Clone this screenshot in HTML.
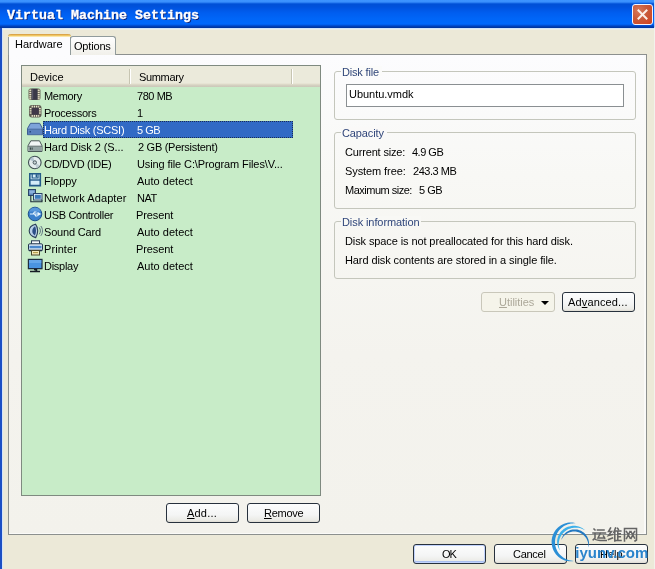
<!DOCTYPE html>
<html><head><meta charset="utf-8"><style>
*{margin:0;padding:0;box-sizing:border-box}
html,body{width:655px;height:569px;overflow:hidden;background:#ece9d8;position:relative;font-family:"Liberation Sans",sans-serif;font-size:11px;color:#000}
.a{position:absolute}
.t{position:absolute;white-space:nowrap;line-height:13px;font-size:11px;will-change:transform}
#title{left:0;top:0;width:655px;height:28px;background:linear-gradient(#3d95ff 0px,#3a90fc 2px,#1a6eea 3px,#0050d6 4px,#0052dc 7px,#0056e4 9px,#005ef0 13px,#0066f8 19px,#0068fb 24px,#0058e4 25px,#0044c0 26px,#003298 28px)}
#tline{left:0;top:28px;width:655px;height:2px;background:linear-gradient(#d4e6f8 0,#d4e6f8 1px,#eceee6 1px)}
#ttext{left:7px;top:7.5px;font-family:"Liberation Mono",monospace;font-weight:bold;font-size:13.33px;color:#fff;text-shadow:1px 1px 0 #0a1c6e;line-height:16px;-webkit-text-stroke:0.3px #fff}
#lb{left:0;top:28px;width:2px;height:541px;background:#1c4fc4}
#lb2{left:2px;top:28px;width:1px;height:541px;background:#d4e4fa}
#close{left:632px;top:4px;width:21px;height:21px;border:1px solid #f4f4ff;border-radius:3px;background:radial-gradient(circle at 30% 30%,#d8785a 0,#c85a3a 45%,#d04a28 80%,#c03c1c 100%)}
#panel{left:8px;top:54px;width:639px;height:481px;border:1px solid #8c908e;background:linear-gradient(#fcfcfe 0,#f8f8f5 120px,#f4f3ee 300px,#f3f2ec 100%);box-shadow:inset -2px -1px 0 #fafaf8}
#tabhw{left:8px;top:34px;width:63px;height:21px;background:#fcfcfe;border-left:1px solid #919b9c;border-right:1px solid #919b9c;border-radius:3px 3px 0 0}
#tabhw .o{left:-1px;top:0;width:63px;height:3px;background:linear-gradient(#dba54a 0,#dba54a 1px,#efc562 1px,#efc562 2px,#fbe6a8 2px);border-radius:3px 3px 0 0}
#tabop{left:70px;top:36px;width:46px;height:19px;border:1px solid #919b9c;border-bottom:none;border-radius:3px 3px 0 0;background:linear-gradient(#fefefe,#f1f0ea)}
#list{left:21px;top:65px;width:300px;height:431px;border:1px solid #7f8a80;background:#c8ecc8}
#hdr{left:0;top:0;width:298px;height:21px;background:linear-gradient(#ebeadb 0,#ebeadb 17px,#e2decd 18px,#d6d2c2 19px,#cbc7b8 21px)}
.sep{position:absolute;top:3px;width:1px;height:15px;background:#c7c5b2;box-shadow:1px 0 0 #fff}
.gb{position:absolute;border:1px solid #c4c6bc;border-radius:3px}
.cap{color:#30467a}
.btn{position:absolute;height:20px;border:1px solid #27313d;border-radius:3px;background:linear-gradient(#fcfdfd 0,#f4f5f5 60%,#ebebe6 90%,#dedbd2 100%);text-align:center;line-height:19px;font-size:11px}
.u{text-decoration:underline}
</style></head><body>
<div id="title" class="a"></div><div id="tline" class="a"></div>
<div id="ttext" class="t">Virtual Machine Settings</div>
<div id="close" class="a"><svg width="19" height="19" style="position:absolute;left:0;top:0"><path d="M5.5 5.5L13.5 13.5M13.5 5.5L5.5 13.5" stroke="#fcefe8" stroke-width="2" stroke-linecap="square"/></svg></div>
<div id="lb" class="a"></div><div id="lb2" class="a"></div><div class="a" style="left:654px;top:0px;width:1px;height:569px;background:linear-gradient(#c8dcf8 0,#a8c4f0 27px,#f2f2ec 28px)"></div>
<div id="panel" class="a"></div>
<div id="tabop" class="a"></div>
<div id="tabhw" class="a"><div class="o a"></div></div>
<div class="t" style="left:14.8px;top:38px;letter-spacing:-0.014px">Hardware</div>
<div class="t" style="left:74.4px;top:40px;letter-spacing:-0.183px">Options</div>
<div id="list" class="a"><div id="hdr" class="a"><div class="sep" style="left:107px"></div><div class="sep" style="left:269px"></div></div></div>
<div class="t" style="left:30.0px;top:71px;letter-spacing:-0.02px">Device</div>
<div class="t" style="left:138.6px;top:71px;letter-spacing:-0.35px">Summary</div>
<svg class="a" width="16" height="16" style="left:27px;top:87px"><rect x="1.5" y="1.5" width="12" height="11.5" rx="2" fill="#6a6658"/><g fill="#ece6cc"><rect x="2.3" y="2.6" width="2.2" height="1.3"/><rect x="2.3" y="4.8" width="2.2" height="1.3"/><rect x="2.3" y="7" width="2.2" height="1.3"/><rect x="2.3" y="9.2" width="2.2" height="1.3"/><rect x="2.3" y="11.2" width="2.2" height="1.1"/><rect x="10.5" y="2.6" width="2.2" height="1.3"/><rect x="10.5" y="4.8" width="2.2" height="1.3"/><rect x="10.5" y="7" width="2.2" height="1.3"/><rect x="10.5" y="9.2" width="2.2" height="1.3"/><rect x="10.5" y="11.2" width="2.2" height="1.1"/></g><rect x="4.5" y="1.8" width="6" height="11" fill="#3a3848"/><rect x="5" y="2.3" width="1.2" height="10" fill="#5a5868"/></svg>
<div class="t" style="left:43.5px;top:90px;letter-spacing:-0.3px;color:#000">Memory</div>
<div class="t" style="left:136.3px;top:90px;letter-spacing:-0.44px;color:#000;margin-left:1px">780 MB</div>
<svg class="a" width="16" height="16" style="left:27px;top:104px"><rect x="2" y="1" width="12.5" height="12.5" rx="3" fill="#5e5a50"/><g fill="#ece6cc"><rect x="4.6" y="1.7" width="1.3" height="2"/><rect x="6.8" y="1.7" width="1.3" height="2"/><rect x="9" y="1.7" width="1.3" height="2"/><rect x="11.2" y="1.7" width="1" height="2"/><rect x="4.6" y="10.8" width="1.3" height="2"/><rect x="6.8" y="10.8" width="1.3" height="2"/><rect x="9" y="10.8" width="1.3" height="2"/><rect x="11.2" y="10.8" width="1" height="2"/><rect x="2.7" y="4" width="2" height="1.3"/><rect x="2.7" y="6.2" width="2" height="1.3"/><rect x="2.7" y="8.4" width="2" height="1.3"/><rect x="11.8" y="4" width="2" height="1.3"/><rect x="11.8" y="6.2" width="2" height="1.3"/><rect x="11.8" y="8.4" width="2" height="1.3"/></g><rect x="4.7" y="3.7" width="7.1" height="7.1" fill="#403848"/></svg>
<div class="t" style="left:43.5px;top:107px;letter-spacing:-0.256px;color:#000">Processors</div>
<div class="t" style="left:137.3px;top:107px;letter-spacing:0.0px;color:#000">1</div>
<svg class="a" width="16" height="16" style="left:27px;top:121px"><path d="M3.5 2.3h9.2l2.8 5.2v6.2h-15v-6.2z" fill="#7ea3da" stroke="#3d5d92"/><rect x="1" y="8.6" width="14" height="4.6" fill="#5a80bd"/><path d="M0.5 8.2h15" stroke="#44669c"/><rect x="2.5" y="10" width="1.5" height="1.5" fill="#2a4a80"/></svg>
<div class="a" style="left:43px;top:121px;width:250px;height:17px;background:#316ac5;outline:1px dotted #1a2e55;outline-offset:-1px"></div>
<div class="t" style="left:43.5px;top:124px;letter-spacing:-0.253px;color:#fff">Hard Disk (SCSI)</div>
<div class="t" style="left:136.5px;top:124px;letter-spacing:-0.5px;color:#fff">5 GB</div>
<svg class="a" width="16" height="16" style="left:27px;top:138px"><path d="M3.8 2.8h8.7l2.5 5v5.7h-14v-5.7z" fill="#f2f6f6" stroke="#4a5858"/><rect x="1.5" y="8.5" width="13" height="4.5" fill="#94a4a4"/><path d="M1 8.2h14" stroke="#5a6868"/><rect x="2.8" y="9.5" width="1.6" height="2.2" fill="#3a4a4a"/><rect x="5" y="9.5" width="1" height="2.2" fill="#5a6a6a"/></svg>
<div class="t" style="left:43.5px;top:141px;letter-spacing:-0.069px;color:#000">Hard Disk 2 (S...</div>
<div class="t" style="left:137.5px;top:141px;letter-spacing:-0.281px;color:#000">2 GB (Persistent)</div>
<svg class="a" width="16" height="16" style="left:27px;top:155px"><circle cx="7.8" cy="7.5" r="6.3" fill="#e4ecee" stroke="#3e4e52" stroke-width="1.1"/><path d="M2.6 4.6A6 6 0 0 1 6 1.6L7.8 7.5z" fill="#a8bcc8" opacity=".8"/><path d="M13 10.4A6 6 0 0 1 9.6 13.4L7.8 7.5z" fill="#b8c8d0" opacity=".8"/><circle cx="7.8" cy="7.5" r="1.7" fill="#c8d4d8" stroke="#4a5a60"/></svg>
<div class="t" style="left:43.5px;top:158px;letter-spacing:-0.3px;color:#000">CD/DVD (IDE)</div>
<div class="t" style="left:136.5px;top:158px;letter-spacing:-0.113px;color:#000">Using file C:\Program Files\V...</div>
<svg class="a" width="16" height="16" style="left:27px;top:172px"><path d="M2.8 1.8h10.5v11.8h-10.5z" fill="#d4ecf8" stroke="#235a88" stroke-width="1.6"/><path d="M5.2 1.8v4.2h5.8v-4.2" fill="none" stroke="#235a88" stroke-width="1.2"/><rect x="8.6" y="2.2" width="1.4" height="3.2" fill="#235a88"/><path d="M2.8 8h10.5" stroke="#235a88" stroke-width="1.4"/></svg>
<div class="t" style="left:43.5px;top:175px;letter-spacing:-0.04px;color:#000">Floppy</div>
<div class="t" style="left:137.1px;top:175px;letter-spacing:0.02px;color:#000">Auto detect</div>
<svg class="a" width="16" height="16" style="left:27px;top:189px"><rect x="1.5" y="0.5" width="7" height="6" fill="#5c86b8" stroke="#2a4468"/><rect x="2.5" y="1.5" width="5" height="3" fill="#8ab0dc"/><rect x="6.5" y="4.5" width="8.5" height="6.5" fill="#e4f0fa" stroke="#2a4468"/><rect x="7.8" y="5.8" width="6" height="4" fill="#3a78b8"/><path d="M3.8 6.5v6.3h3M6.8 12.8h8.2v-1.8" stroke="#1a2a38" fill="none" stroke-width="1.1"/></svg>
<div class="t" style="left:43.5px;top:192px;letter-spacing:0.071px;color:#000">Network Adapter</div>
<div class="t" style="left:136.5px;top:192px;letter-spacing:-0.5px;color:#000">NAT</div>
<svg class="a" width="16" height="16" style="left:27px;top:206px"><circle cx="8" cy="8" r="6.8" fill="#3a80cc" stroke="#1d4f8e"/><path d="M8 1.5a6.5 6.5 0 0 1 6 4h-12a6.5 6.5 0 0 1 6-4z" fill="#6aa8e4" opacity=".6"/><path d="M3 8h9.5M10.5 6.5L13 8l-2.5 1.5M6 8l1.5-2h2M7.5 8l1.2 2h1.8" stroke="#e8f6ff" fill="none" stroke-width="1.2"/></svg>
<div class="t" style="left:43.5px;top:209px;letter-spacing:-0.308px;color:#000">USB Controller</div>
<div class="t" style="left:135.8px;top:209px;letter-spacing:-0.083px;color:#000">Present</div>
<svg class="a" width="16" height="16" style="left:27px;top:223px"><path d="M8.5 1.2C5 2 2.2 4.5 2.2 7.8s2.8 5.8 6.5 6.8c1.3-2 2-4.3 2-6.8S10 3.2 8.5 1.2z" fill="#b8d0e8" stroke="#2a3e58" stroke-width="1.1"/><path d="M8 3.2C6.2 4.5 5.3 6 5.3 8s.9 3.4 2.5 4.5c.8-1.4 1.2-2.9 1.2-4.5S8.7 4.5 8 3.2z" fill="#2c4e86"/><path d="M12.2 4.5c.8 1 1.2 2.2 1.2 3.4s-.4 2.4-1.2 3.4M13.8 3c1.1 1.4 1.7 3 1.7 4.9s-.6 3.5-1.7 4.9" stroke="#5a6e7e" fill="none"/></svg>
<div class="t" style="left:43.5px;top:226px;letter-spacing:-0.189px;color:#000">Sound Card</div>
<div class="t" style="left:137.1px;top:226px;letter-spacing:0.02px;color:#000">Auto detect</div>
<svg class="a" width="16" height="16" style="left:27px;top:240px"><rect x="4.5" y="0.8" width="8" height="3.5" fill="#f8fafc" stroke="#2a3e58"/><rect x="1.5" y="3.8" width="14" height="7" rx="1.2" fill="#dce8f4" stroke="#22364e"/><rect x="2.5" y="5.8" width="12" height="2.5" fill="#4a88cc"/><path d="M2 10.3h13" stroke="#1a2a40" stroke-width="1.2"/><rect x="4.5" y="10.5" width="8" height="4.5" fill="#f4eabc" stroke="#4a4428"/><rect x="6" y="12" width="5" height="1.2" fill="#b8a050"/></svg>
<div class="t" style="left:43.5px;top:243px;letter-spacing:0.067px;color:#000">Printer</div>
<div class="t" style="left:135.8px;top:243px;letter-spacing:-0.083px;color:#000">Present</div>
<svg class="a" width="16" height="16" style="left:27px;top:257px"><rect x="0.8" y="1.8" width="14.8" height="10.5" fill="#1c2c40"/><rect x="2" y="3" width="12.4" height="8" fill="#4a94e0"/><rect x="2" y="3" width="12.4" height="3" fill="#78b4ee" opacity=".6"/><path d="M7 12.5h2.5v1.5M3 14.6h10" stroke="#141c24" stroke-width="1.5"/></svg>
<div class="t" style="left:43.5px;top:260px;letter-spacing:-0.267px;color:#000">Display</div>
<div class="t" style="left:137.1px;top:260px;letter-spacing:0.02px;color:#000">Auto detect</div>
<div class="gb" style="left:334px;top:71px;width:302px;height:49px"></div>
<div class="a" style="left:341px;top:66px;width:41px;height:10px;background:#fbfbfa"></div>
<div class="t cap" style="left:341.4px;top:66px;letter-spacing:-0.175px;margin-left:1px">Disk file</div>
<div class="a" style="left:346px;top:84px;width:278px;height:23px;border:1px solid #8a8f92;background:#fff"></div>
<div class="t" style="left:348.4px;top:88px;letter-spacing:-0.03px;margin-left:0.6px">Ubuntu.vmdk</div>
<div class="gb" style="left:334px;top:132px;width:302px;height:77px"></div>
<div class="a" style="left:341px;top:127px;width:46px;height:10px;background:#faf9f8"></div>
<div class="t cap" style="left:341.4px;top:127px;letter-spacing:-0.114px;margin-left:1px">Capacity</div>
<div class="t" style="left:345.0px;top:146px;letter-spacing:-0.167px">Current size:</div>
<div class="t" style="left:412.3px;top:146px;letter-spacing:-0.5px">4.9 GB</div>
<div class="t" style="left:345.0px;top:165px;letter-spacing:-0.091px">System free:</div>
<div class="t" style="left:412.5px;top:165px;letter-spacing:-0.457px">243.3 MB</div>
<div class="t" style="left:345.0px;top:184px;letter-spacing:-0.5px">Maximum size:</div>
<div class="t" style="left:418.7px;top:184px;letter-spacing:-0.5px">5 GB</div>
<div class="gb" style="left:334px;top:221px;width:302px;height:58px"></div>
<div class="a" style="left:341px;top:216px;width:80px;height:10px;background:#f8f8f5"></div>
<div class="t cap" style="left:341.4px;top:216px;letter-spacing:-0.087px;margin-left:1px">Disk information</div>
<div class="t" style="left:344.6px;top:235px;letter-spacing:-0.102px">Disk space is not preallocated for this hard disk.</div>
<div class="t" style="left:344.6px;top:254px;letter-spacing:-0.1px">Hard disk contents are stored in a single file.</div>
<div class="btn" style="left:481px;top:292px;width:74px;border-color:#c9c7ba;background:#f5f4ea"><svg class="a" width="9" height="5" style="left:59px;top:8px"><path d="M0 0h8l-4 4z" fill="#000"/></svg></div>
<div class="t" style="left:498.5px;top:296px;letter-spacing:-0.013px;color:#aca899"><span class="u">U</span>tilities</div>
<div class="btn" style="left:562px;top:292px;width:73px"></div>
<div class="t" style="left:568.0px;top:296px;letter-spacing:0.14px">Ad<span class="u">v</span>anced...</div>
<div class="btn" style="left:166px;top:503px;width:73px"></div>
<div class="t" style="left:187.2px;top:507px;letter-spacing:0.2px"><span class="u">A</span>dd...</div>
<div class="btn" style="left:247px;top:503px;width:73px"></div>
<div class="t" style="left:262.3px;top:507px;letter-spacing:-0.26px;margin-left:2px"><span class="u">R</span>emove</div>
<div class="btn" style="left:413px;top:544px;width:73px;box-shadow:inset 0 0 0 1px #c2d3fc, inset 0 -1px 0 1px #a8bef0"></div>
<div class="t" style="left:441.8px;top:548px;letter-spacing:-0.5px;letter-spacing:-1px;margin-left:0px">OK</div>
<div class="btn" style="left:494px;top:544px;width:73px"></div>
<div class="t" style="left:512.8px;top:548px;letter-spacing:-0.28px">Cancel</div>
<div class="btn" style="left:575px;top:544px;width:73px"></div>
<div class="t" style="left:600px;top:548px">Help</div>
<svg class="a" width="110" height="54" style="left:545px;top:515px"><path d="M30.60 8.29 L29.02 7.85 L27.38 7.61 L25.73 7.53 L24.05 7.61 L22.39 7.83 L20.74 8.21 L19.12 8.74 L17.55 9.41 L16.04 10.23 L14.60 11.18 L13.25 12.26 L12.00 13.46 L10.85 14.77 L9.83 16.19 L8.93 17.69 L8.17 19.27 L7.55 20.92 L7.09 22.61 L6.78 24.34 L6.62 26.10 L6.62 27.86 L6.78 29.61 L7.10 31.34 L7.57 33.03 L8.19 34.67 L8.95 36.25 L9.85 37.75 L10.87 39.16 L12.02 40.46 L13.27 41.66 L14.62 42.73 L16.05 43.67 L17.56 44.48 L19.13 45.15 L20.74 45.67 L22.38 46.04 L24.03 46.26 L25.69 46.32 L27.34 46.22 L28.96 45.93 L28.96 45.93 L27.34 45.78 L25.76 45.55 L24.21 45.21 L22.71 44.75 L21.26 44.18 L19.87 43.50 L18.54 42.71 L17.30 41.83 L16.13 40.85 L15.05 39.79 L14.07 38.66 L13.18 37.45 L12.40 36.18 L11.72 34.85 L11.15 33.48 L10.69 32.08 L10.35 30.64 L10.12 29.19 L10.01 27.72 L10.02 26.25 L10.14 24.78 L10.38 23.33 L10.73 21.89 L11.20 20.49 L11.78 19.13 L12.46 17.82 L13.25 16.56 L14.14 15.36 L15.13 14.23 L16.21 13.19 L17.38 12.22 L18.63 11.35 L19.95 10.58 L21.33 9.92 L22.78 9.36 L24.27 8.92 L25.81 8.59 L27.38 8.39 L28.98 8.30 L30.60 8.29Z" fill="#2b8fd6"/><path d="M14.91 35.34 L14.28 34.49 L13.75 33.58 L13.29 32.62 L12.91 31.61 L12.60 30.57 L12.37 29.49 L12.21 28.40 L12.14 27.28 L12.15 26.15 L12.24 25.02 L12.42 23.89 L12.69 22.77 L13.03 21.66 L13.46 20.58 L13.97 19.52 L14.56 18.50 L15.23 17.52 L15.97 16.58 L16.79 15.70 L17.66 14.88 L18.60 14.12 L19.60 13.43 L20.65 12.81 L21.74 12.27 L22.87 11.80 L24.04 11.42 L25.23 11.13 L26.44 10.92 L27.67 10.80 L28.90 10.77 L30.13 10.83 L31.35 10.97 L32.57 11.21 L33.76 11.53 L34.92 11.94 L36.05 12.43 L37.14 13.00 L38.18 13.65 L39.17 14.38 L40.07 15.21 L40.07 15.21 L38.97 14.66 L37.87 14.15 L36.75 13.72 L35.63 13.36 L34.50 13.07 L33.36 12.86 L32.22 12.72 L31.09 12.65 L29.97 12.66 L28.85 12.74 L27.76 12.89 L26.69 13.10 L25.64 13.38 L24.62 13.72 L23.63 14.12 L22.67 14.58 L21.76 15.10 L20.88 15.66 L20.04 16.28 L19.25 16.94 L18.50 17.65 L17.80 18.40 L17.16 19.18 L16.56 20.00 L16.02 20.86 L15.53 21.74 L15.10 22.64 L14.73 23.57 L14.41 24.52 L14.16 25.49 L13.96 26.47 L13.83 27.46 L13.76 28.45 L13.75 29.45 L13.80 30.45 L13.91 31.44 L14.08 32.43 L14.31 33.41 L14.60 34.37 L14.91 35.34Z" fill="#3cb0ea"/><path d="M16.31 24.88 L16.54 23.87 L16.87 22.89 L17.29 21.93 L17.80 21.00 L18.39 20.11 L19.04 19.26 L19.77 18.47 L20.57 17.73 L21.43 17.05 L22.35 16.44 L23.31 15.90 L24.32 15.44 L25.37 15.06 L26.45 14.76 L27.56 14.55 L28.68 14.43 L29.82 14.39 L30.95 14.45 L32.09 14.60 L33.20 14.84 L34.30 15.17 L35.37 15.58 L36.41 16.09 L37.40 16.67 L38.34 17.33 L39.23 18.06 L40.06 18.86 L40.82 19.72 L41.51 20.64 L42.12 21.62 L42.66 22.63 L43.11 23.69 L43.47 24.77 L43.75 25.88 L43.94 27.00 L44.04 28.13 L44.04 29.26 L43.96 30.39 L43.78 31.50 L43.48 32.58 L43.48 32.58 L43.49 31.46 L43.46 30.36 L43.36 29.27 L43.18 28.21 L42.93 27.17 L42.62 26.16 L42.23 25.18 L41.78 24.23 L41.26 23.33 L40.69 22.47 L40.07 21.66 L39.39 20.91 L38.66 20.20 L37.89 19.55 L37.08 18.96 L36.24 18.44 L35.37 17.97 L34.46 17.57 L33.54 17.23 L32.60 16.96 L31.64 16.75 L30.67 16.61 L29.70 16.54 L28.73 16.54 L27.76 16.60 L26.80 16.74 L25.84 16.94 L24.91 17.20 L23.99 17.53 L23.10 17.92 L22.24 18.38 L21.41 18.90 L20.61 19.47 L19.86 20.10 L19.15 20.78 L18.49 21.52 L17.87 22.30 L17.31 23.13 L16.80 23.99 L16.31 24.88Z" fill="#2378c0"/></svg>
<svg class="a" width="48" height="16" style="left:592px;top:527px" fill="none" stroke="#646464" stroke-width="1.55" stroke-linecap="square"><g transform="translate(0.5,0.5)"><path d="M5 2.5h6.5M4 5.5h9M8 5.5L5.5 10.5h6.5M11 8.5l1.2 2.2M1.5 1.5l1 1M0.5 5.5h2v5l-1.8 1.8M2.2 11.5c2 1.5 6 1.8 11.5 1.5"/></g><g transform="translate(15.5,0.5)"><path d="M3 0.5L1 4h3L1 8l4-1M1 12l4-1.5M8 0.5L6.3 5M7.3 3.5v10M10 0.8l.8 1M7.3 3.5h6M10.3 3.5v9.5M10.3 6.3h2.5M10.3 9.3h2.5M7.3 13h6.2"/></g><g transform="translate(31.5,0.5)"><path d="M1 13.5V1h12v11.5l-1.5 1M3 4l3.5 6.5M6.5 4L3 11M7.5 4l3.5 6.5M11 4l-3.5 7"/></g></svg>
<div class="a" style="left:575.3px;top:544.8px;font:bold 15px/15px 'Liberation Sans';color:#2a84cc;white-space:nowrap">iyunv.com</div>
</body></html>
